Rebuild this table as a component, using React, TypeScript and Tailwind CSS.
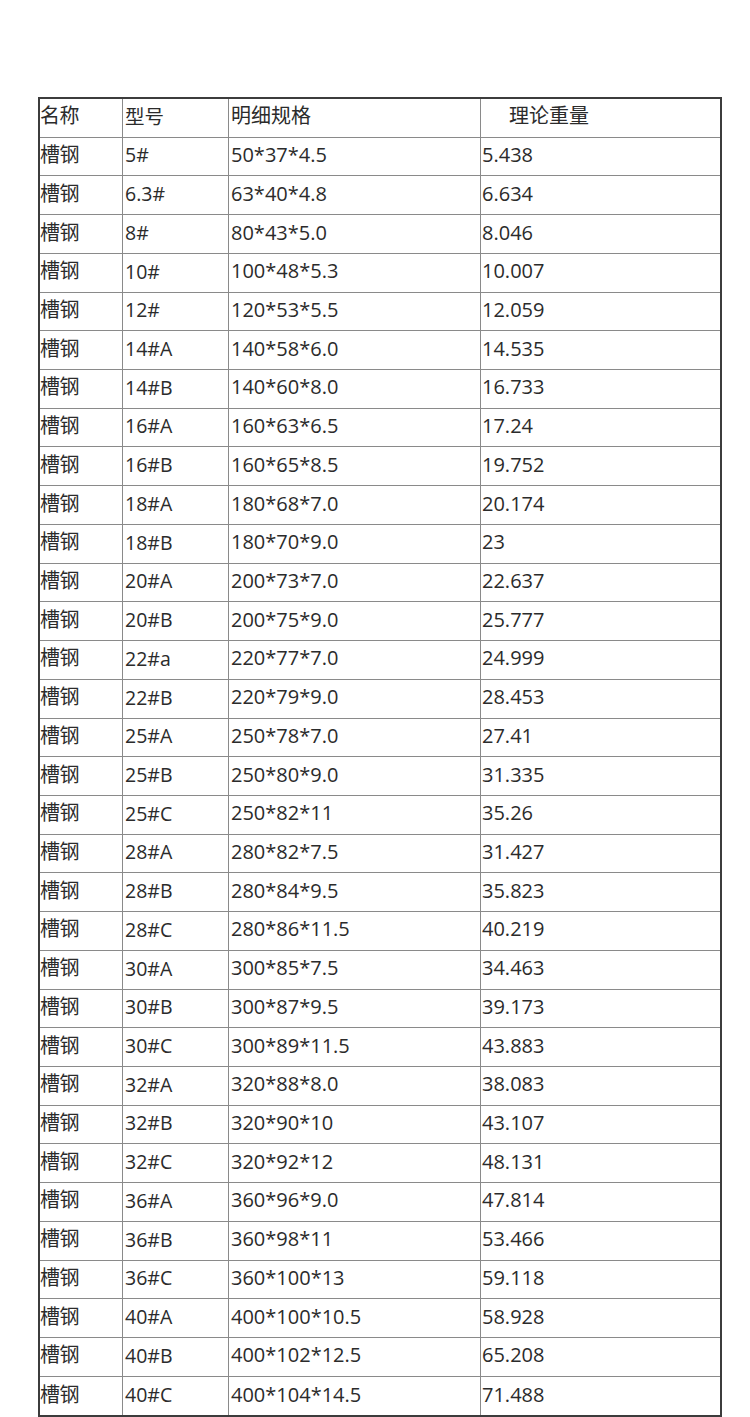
import React from "react";

const rows: [string, string, string][] = [
  ["5#", "50*37*4.5", "5.438"],
  ["6.3#", "63*40*4.8", "6.634"],
  ["8#", "80*43*5.0", "8.046"],
  ["10#", "100*48*5.3", "10.007"],
  ["12#", "120*53*5.5", "12.059"],
  ["14#A", "140*58*6.0", "14.535"],
  ["14#B", "140*60*8.0", "16.733"],
  ["16#A", "160*63*6.5", "17.24"],
  ["16#B", "160*65*8.5", "19.752"],
  ["18#A", "180*68*7.0", "20.174"],
  ["18#B", "180*70*9.0", "23"],
  ["20#A", "200*73*7.0", "22.637"],
  ["20#B", "200*75*9.0", "25.777"],
  ["22#a", "220*77*7.0", "24.999"],
  ["22#B", "220*79*9.0", "28.453"],
  ["25#A", "250*78*7.0", "27.41"],
  ["25#B", "250*80*9.0", "31.335"],
  ["25#C", "250*82*11", "35.26"],
  ["28#A", "280*82*7.5", "31.427"],
  ["28#B", "280*84*9.5", "35.823"],
  ["28#C", "280*86*11.5", "40.219"],
  ["30#A", "300*85*7.5", "34.463"],
  ["30#B", "300*87*9.5", "39.173"],
  ["30#C", "300*89*11.5", "43.883"],
  ["32#A", "320*88*8.0", "38.083"],
  ["32#B", "320*90*10", "43.107"],
  ["32#C", "320*92*12", "48.131"],
  ["36#A", "360*96*9.0", "47.814"],
  ["36#B", "360*98*11", "53.466"],
  ["36#C", "360*100*13", "59.118"],
  ["40#A", "400*100*10.5", "58.928"],
  ["40#B", "400*102*12.5", "65.208"],
  ["40#C", "400*104*14.5", "71.488"],
];

const font = {
  fontFamily: '"Open Sans", "Noto Sans CJK SC", sans-serif',
};

function Row({ cells, last, header }: { cells: string[]; last: boolean; header?: boolean }) {
  return (
    <div
      className={`grid grid-cols-[83px_106px_252px_1fr] h-[38.72px] ${last ? "" : "border-b border-[#8a8a8a]"}`}
    >
      <div className="border-r border-[#8a8a8a] flex items-center pl-0 pb-[3px] text-[20px] tracking-[-0.5px] text-[#2b2b2b]">
        {cells[0]}
      </div>
      <div className="border-r border-[#8a8a8a] flex items-center pl-[2px] pb-[3px] text-[19.5px] text-[#2b2b2b]">
        {cells[1]}
      </div>
      <div className="border-r border-[#8a8a8a] flex items-center pl-[2px] pb-[3px] text-[20px] text-[#2b2b2b]">
        {cells[2]}
      </div>
      <div
        className={`flex items-center pb-[3px] text-[20px] text-[#2b2b2b] ${header ? "pl-[28px]" : "pl-[1px]"}`}
      >
        {cells[3]}
      </div>
    </div>
  );
}

export default function App() {
  return (
    <div className="w-[750px] h-[1417px] bg-white overflow-hidden" style={font}>
      <div className="pt-[97px] pl-[38px]">
        <div className="w-[684px] border-2 border-[#3c3c3c] bg-white">
          <Row cells={["名称", "型号", "明细规格", "理论重量"]} last={false} header />
          {rows.map((r, i) => (
            <Row key={i} cells={["槽钢", r[0], r[1], r[2]]} last={i === rows.length - 1} />
          ))}
        </div>
      </div>
    </div>
  );
}
